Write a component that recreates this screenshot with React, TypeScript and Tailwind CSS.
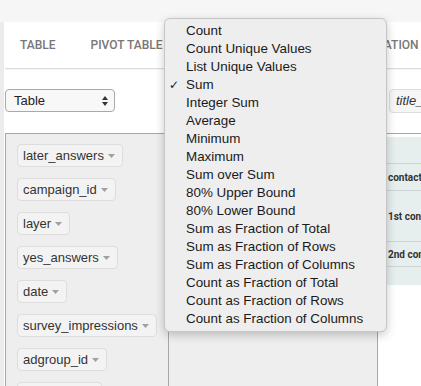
import React from "react";

const aggregators = [
  "Count",
  "Count Unique Values",
  "List Unique Values",
  "Sum",
  "Integer Sum",
  "Average",
  "Minimum",
  "Maximum",
  "Sum over Sum",
  "80% Upper Bound",
  "80% Lower Bound",
  "Sum as Fraction of Total",
  "Sum as Fraction of Rows",
  "Sum as Fraction of Columns",
  "Count as Fraction of Total",
  "Count as Fraction of Rows",
  "Count as Fraction of Columns",
];

const attrs = [
  "later_answers",
  "campaign_id",
  "layer",
  "yes_answers",
  "date",
  "survey_impressions",
  "adgroup_id",
  "placement",
];

function Caret() {
  return (
    <svg width="7" height="4" viewBox="0 0 7 4" className="shrink-0">
      <path d="M0 0 L7 0 L3.5 4 Z" fill="#a0a0a0" />
    </svg>
  );
}

function Pill({ name }: { name: string }) {
  return (
    <div className="flex h-[23px] shrink-0 items-center gap-[4px] rounded-[4px] border border-[#dddddd] bg-[#f3f3f3] pl-[5px] pr-[7px] text-[13px] text-[#333]">
      <span>{name}</span>
      <Caret />
    </div>
  );
}

export default function App() {
  return (
    <div className="relative flex h-[386px] w-[421px] flex-col overflow-hidden bg-[#f6f6f6] font-['Liberation_Sans',Arial,sans-serif]">
      <div className="h-[22px] shrink-0" />
      <div className="flex flex-1">
        <div className="w-[4px] shrink-0 bg-[#ececec]" />
        <div className="flex-1 bg-white pl-[1px]">
          {/* tabs */}
          <div className="flex h-[47px] items-center gap-[35px] border-b border-[#dcdcdc] pl-[15px] font-['Roboto',sans-serif] text-[12px] font-medium text-[#777] shadow-[0_1px_1px_rgba(0,0,0,0.04)]">
            <span>TABLE</span>
            <span>PIVOT TABLE</span>
            <span className="ml-[135px] whitespace-nowrap">VISUALIZATION</span>
          </div>

          {/* renderer row */}
          <div className="mt-[20px] flex h-[23px] items-center">
            <div className="flex h-[23px] w-[110px] shrink-0 items-center justify-between rounded-[4px] border border-[#a9a9a9] bg-[#f8f8f8] pl-[8px] pr-[6px] text-[13px] text-[#222]">
              <span>Table</span>
              <svg width="6" height="10" viewBox="0 0 6 10">
                <path d="M0 4 L3 0 L6 4 Z" fill="#333" />
                <path d="M0 6 L3 10 L6 6 Z" fill="#333" />
              </svg>
            </div>
            <div className="ml-[274px] flex h-[24px] w-[60px] shrink-0 items-center rounded-[4px] border border-[#dddddd] bg-[#f6f6f6] pl-[6px] text-[13px] italic text-[#333]">
              title_answers
            </div>
          </div>

          {/* pivot area */}
          <div className="mt-[21px] flex h-[260px] border-t border-[#a7a7a7]">
            <div className="flex w-[164px] shrink-0 flex-col items-start gap-[11px] border-x border-[#a7a7a7] bg-[#eeeeee] pl-[11px] pt-[10px]">
              {attrs.map((a) => (
                <Pill key={a} name={a} />
              ))}
            </div>
            <div className="w-[209px] shrink-0 border-r border-[#a7a7a7] bg-[#eeeeee]" />
            <div className="flex-1 pt-[3px]">
              <div className="flex flex-col bg-[#e6eeee] font-['Roboto',sans-serif] text-[10px] font-bold text-[#333]">
                <div className="h-[27px] border-b border-[#cdd6d6]" />
                <div className="flex h-[27px] items-center border-b border-[#cdd6d6] pl-[10px] whitespace-nowrap">
                  contact_type
                </div>
                <div className="flex h-[51px] items-center border-b border-[#cdd6d6] pl-[10px] whitespace-nowrap">
                  1st contact
                </div>
                <div className="flex h-[25px] items-center border-b border-[#cdd6d6] pl-[10px] whitespace-nowrap">
                  2nd contact
                </div>
                <div className="h-[18px]" />
              </div>
            </div>
          </div>
        </div>
      </div>

      {/* aggregator dropdown */}
      <div className="absolute left-[164px] top-[18px] w-[223px] rounded-[6px] border border-[#c6c6c6] bg-[#eeeeee] py-[3px] shadow-[0_3px_10px_rgba(0,0,0,0.22)]">
        {aggregators.map((a) => (
          <div
            key={a}
            className="relative h-[18px] whitespace-nowrap pl-[21px] text-[13.4px] leading-[18px] text-[#1a1a1a]"
          >
            {a === "Sum" && (
              <span className="absolute left-[4px] top-0 font-['DejaVu_Sans',sans-serif] text-[12px]">
                ✓
              </span>
            )}
            {a}
          </div>
        ))}
      </div>
    </div>
  );
}
